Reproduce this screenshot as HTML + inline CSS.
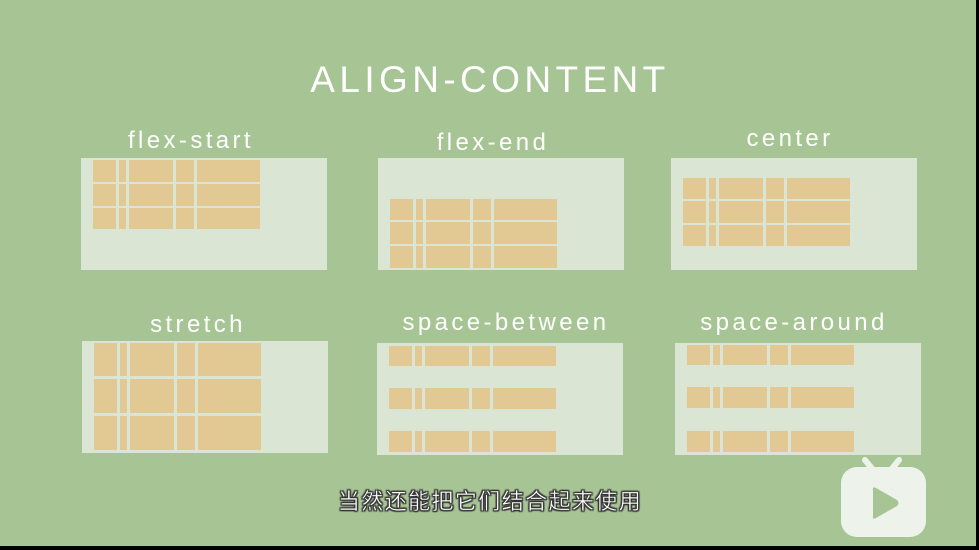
<!DOCTYPE html>
<html><head><meta charset="utf-8"><style>
body{margin:0;width:979px;height:550px;overflow:hidden;background:#000;position:relative;font-family:"Liberation Sans","Noto Sans CJK SC",sans-serif}
#bg{position:absolute;left:0;top:0;width:976px;height:546px;background:#a7c594}
.p{position:absolute;width:246px;height:112px;background:#dae6d3}
.r{position:absolute;display:flex;gap:3px}
.r i{display:block;background:#e2c993;height:100%}
.r i:nth-child(1){width:23px}.r i:nth-child(2){width:7px}.r i:nth-child(3){width:44px}.r i:nth-child(4){width:18px}.r i:nth-child(5){width:63px}
.l{position:absolute;color:#fff;font-size:24px;letter-spacing:3.4px;text-align:center;width:300px}
</style></head><body>
<div id="bg"></div>
<div style="position:absolute;left:280px;width:420px;top:59px;text-align:center;color:#fff;font-size:37px;letter-spacing:4.4px">ALIGN-CONTENT</div>

<div class="l" style="left:41px;top:127px">flex-start</div>
<div class="l" style="left:343px;top:129px">flex-end</div>
<div class="l" style="left:640px;top:125px">center</div>
<div class="l" style="left:48px;top:311px">stretch</div>
<div class="l" style="left:356px;top:309px">space-between</div>
<div class="l" style="left:644px;top:309px">space-around</div>

<div class="p" style="left:81px;top:158px"></div>
<div class="r" style="left:93px;top:160px;height:22px"><i></i><i></i><i></i><i></i><i></i></div>
<div class="r" style="left:93px;top:184px;height:22px"><i></i><i></i><i></i><i></i><i></i></div>
<div class="r" style="left:93px;top:208px;height:21px"><i></i><i></i><i></i><i></i><i></i></div>

<div class="p" style="left:378px;top:158px"></div>
<div class="r" style="left:390px;top:199px;height:21px"><i></i><i></i><i></i><i></i><i></i></div>
<div class="r" style="left:390px;top:222px;height:22px"><i></i><i></i><i></i><i></i><i></i></div>
<div class="r" style="left:390px;top:246px;height:22px"><i></i><i></i><i></i><i></i><i></i></div>

<div class="p" style="left:671px;top:158px"></div>
<div class="r" style="left:683px;top:178px;height:21px"><i></i><i></i><i></i><i></i><i></i></div>
<div class="r" style="left:683px;top:201px;height:22px"><i></i><i></i><i></i><i></i><i></i></div>
<div class="r" style="left:683px;top:225px;height:21px"><i></i><i></i><i></i><i></i><i></i></div>

<div class="p" style="left:82px;top:341px"></div>
<div class="r" style="left:94px;top:343px;height:33px"><i></i><i></i><i></i><i></i><i></i></div>
<div class="r" style="left:94px;top:379px;height:34px"><i></i><i></i><i></i><i></i><i></i></div>
<div class="r" style="left:94px;top:416px;height:34px"><i></i><i></i><i></i><i></i><i></i></div>

<div class="p" style="left:377px;top:343px"></div>
<div class="r" style="left:389px;top:346px;height:20px"><i></i><i></i><i></i><i></i><i></i></div>
<div class="r" style="left:389px;top:388px;height:21px"><i></i><i></i><i></i><i></i><i></i></div>
<div class="r" style="left:389px;top:431px;height:21px"><i></i><i></i><i></i><i></i><i></i></div>

<div class="p" style="left:675px;top:343px"></div>
<div class="r" style="left:687px;top:345px;height:20px"><i></i><i></i><i></i><i></i><i></i></div>
<div class="r" style="left:687px;top:387px;height:21px"><i></i><i></i><i></i><i></i><i></i></div>
<div class="r" style="left:687px;top:431px;height:21px"><i></i><i></i><i></i><i></i><i></i></div>

<div style="position:absolute;left:320px;width:340px;top:484px;text-align:center;color:#fff;font-size:22px;letter-spacing:1.4px;-webkit-text-stroke:0.4px #333;text-shadow:0 0 2px #333,1px 1px 1px #333,-1px -1px 1px #333,1px -1px 1px #333,-1px 1px 1px #333">当然还能把它们结合起来使用</div>

<svg style="position:absolute;left:836px;top:452px" width="96" height="92" viewBox="836 452 96 92">
<line x1="865" y1="460" x2="874" y2="471" stroke="#edf3ea" stroke-width="6" stroke-linecap="round"/>
<line x1="899" y1="460" x2="890" y2="471" stroke="#edf3ea" stroke-width="6" stroke-linecap="round"/>
<rect x="841" y="467" width="85" height="70" rx="16" fill="#edf3ea"/>
<path d="M873 490 Q872 486 876 488 L897 500 Q900 503 897 506 L876 518 Q872 520 873 516 Z" fill="#a7c594"/>
</svg>
</body></html>
